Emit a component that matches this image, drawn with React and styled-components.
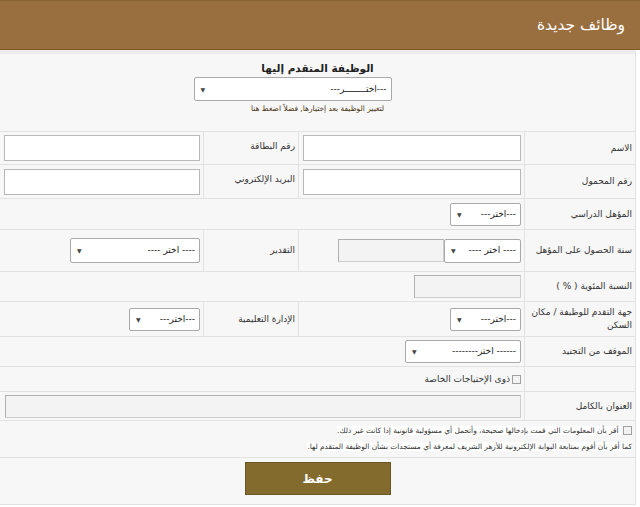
import React from 'react'
import styled, { createGlobalStyle } from 'styled-components'

const GlobalStyle = createGlobalStyle`
  html, body {
    margin: 0;
    padding: 0;
    background: #ffffff;
  }
  body {
    font-family: Tahoma, "DejaVu Sans", Arial, sans-serif;
  }
`

const Page = styled.div`
  width: 640px;
  height: 507px;
  direction: rtl;
  background: #ffffff;
  overflow: hidden;
`

const Header = styled.div`
  height: 48px;
  background: #9a6f3f;
  border-top: 1px solid #86632f;
  border-bottom: 1px solid #7d5a25;
  display: flex;
  align-items: center;
  padding-right: 15px;
`

const Title = styled.h1`
  margin: 0;
  color: #ffffff;
  font-size: 15.5px;
  font-weight: normal;
`

const Panel = styled.div`
  width: 635px;
  margin-right: auto;
  margin-left: 0;
  border-top: 4px solid #ececec;
  border-right: 1px solid #e2e2e2;
  background: #f7f7f7;
`

const JobSection = styled.div`
  height: 78px;
  display: flex;
  flex-direction: column;
  align-items: center;
  padding-top: 8px;
  box-sizing: border-box;
  border-bottom: 1px solid #e2e2e2;
`

const JobLabel = styled.div`
  font-size: 10.5px;
  font-weight: bold;
  color: #222;
  margin-bottom: 3px;
`

const JobSelectWrap = styled.div`
  margin-right: 50px;
`

const Hint = styled.div`
  font-size: 7.5px;
  color: #4a3210;
  margin-top: 3px;
`

const Row = styled.div`
  display: grid;
  grid-template-columns: 111px 226px 95px 1fr;
  height: ${p => p.h}px;
  border-bottom: 1px solid #e2e2e2;
  box-sizing: border-box;
`

const Cell = styled.div`
  grid-column: span ${p => p.span || 1};
  display: flex;
  align-items: ${p => (p.top ? 'flex-start' : 'center')};
  padding: ${p => (p.top ? '8px 3px 0 4px' : '0 3px 0 4px')};
  border-left: ${p => (p.last ? 'none' : '1px solid #e2e2e2')};
  font-size: 9px;
  color: #333;
  line-height: 13px;
`

const TextInput = styled.div`
  width: ${p => p.w}px;
  height: ${p => p.hgt || 26}px;
  box-sizing: border-box;
  background: ${p => (p.disabled ? '#f3f3f3' : '#ffffff')};
  border: 1px solid ${p => (p.disabled ? '#cdcdcd' : '#b8b8b8')};
  border-top-color: ${p => (p.disabled ? '#b0b0b0' : '#b8b8b8')};
  border-left-color: ${p => (p.disabled ? '#b0b0b0' : '#b8b8b8')};
`

const SelectBox = styled.div`
  width: ${p => p.w}px;
  height: ${p => p.hgt || 23}px;
  box-sizing: border-box;
  background: #ffffff;
  border: 1px solid #a9a9a9;
  border-radius: 2px;
  display: flex;
  align-items: center;
  justify-content: space-between;
  padding: 0 4px 0 6px;
  font-size: 9px;
  color: #222;
`

const Arrow = styled.span`
  font-size: 6px;
  color: #444;
`

const Check = styled.span`
  display: inline-block;
  width: 7px;
  height: 7px;
  border: 1px solid #a0a0a0;
  background: #f2f2f2;
  margin-left: 2px;
  flex-shrink: 0;
`

const Agree = styled.div`
  height: 37px;
  padding: 1px 3px 0 0;
  box-sizing: border-box;
  border-bottom: 1px solid #e2e2e2;
  font-size: 7.4px;
  color: #333;
`

const AgreeLine = styled.div`
  display: flex;
  align-items: center;
  height: 16px;
  span.txt {
    background: #ffffff;
  }
`

const Actions = styled.div`
  height: 47px;
  display: flex;
  justify-content: center;
  padding-top: 4px;
  box-sizing: border-box;
  border-bottom: 1px solid #e2e2e2;
`

const SaveButton = styled.button`
  width: 146px;
  height: 33px;
  background: #826b2c;
  border: 1px solid #6a5620;
  color: #ffffff;
  font-family: inherit;
  font-size: 12px;
  font-weight: bold;
  direction: rtl;
`

const Select = ({ w, hgt, children }) => (
  <SelectBox w={w} hgt={hgt}>
    <span>{children}</span>
    <Arrow>▼</Arrow>
  </SelectBox>
)

export default function App() {
  return (
    <Page>
      <GlobalStyle />
      <Header>
        <Title>وظائف جديدة</Title>
      </Header>
      <Panel>
        <JobSection>
          <JobLabel>الوظيفة المتقدم إليها</JobLabel>
          <JobSelectWrap>
            <Select w={198} hgt={24}>---اختــــــــر---</Select>
          </JobSelectWrap>
          <Hint>لتغيير الوظيفة بعد إختيارها, فضلاً اضغط هنا</Hint>
        </JobSection>

        <Row h={33}>
          <Cell>الاسم</Cell>
          <Cell><TextInput w={218} /></Cell>
          <Cell top>رقم البطاقة</Cell>
          <Cell last><TextInput w={196} /></Cell>
        </Row>
        <Row h={34}>
          <Cell>رقم المحمول</Cell>
          <Cell><TextInput w={218} /></Cell>
          <Cell top>البريد الإلكتروني</Cell>
          <Cell last><TextInput w={196} /></Cell>
        </Row>
        <Row h={31}>
          <Cell>المؤهل الدراسي</Cell>
          <Cell span={3} last><Select w={71}>---اختر--- </Select></Cell>
        </Row>
        <Row h={42}>
          <Cell>سنة الحصول على المؤهل</Cell>
          <Cell>
            <Select w={77} hgt={24}>---- اختر ----</Select>
            <TextInput w={106} hgt={23} disabled />
          </Cell>
          <Cell>التقدير</Cell>
          <Cell last><Select w={130} hgt={25}>---- اختر ----</Select></Cell>
        </Row>
        <Row h={30}>
          <Cell>النسبة المئوية ( % )</Cell>
          <Cell span={3} last><TextInput w={107} hgt={23} disabled /></Cell>
        </Row>
        <Row h={35}>
          <Cell>جهة التقدم للوظيفة / مكان السكن</Cell>
          <Cell><Select w={71}>---اختر--- </Select></Cell>
          <Cell>الإدارة التعليمية</Cell>
          <Cell last><Select w={71}>---اختر--- </Select></Cell>
        </Row>
        <Row h={30}>
          <Cell>الموقف من التجنيد</Cell>
          <Cell span={3} last><Select w={116}>------ اختر--------</Select></Cell>
        </Row>
        <Row h={25}>
          <Cell />
          <Cell span={3} last>
            <Check />
            <span>ذوى الإحتياجات الخاصة</span>
          </Cell>
        </Row>
        <Row h={29}>
          <Cell>العنوان بالكامل</Cell>
          <Cell span={3} last><TextInput w={516} hgt={23} disabled /></Cell>
        </Row>

        <Agree>
          <AgreeLine>
            <Check />
            <span className="txt">&nbsp;أقر بأن المعلومات التي قمت بإدخالها صحيحة، وأتحمل أي مسؤولية قانونية إذا كانت غير ذلك.</span>
          </AgreeLine>
          <AgreeLine>
            <span className="txt">كما أقر بأن أقوم بمتابعة البوابة الإلكترونية للأزهر الشريف لمعرفة أي مستجدات بشأن الوظيفة المتقدم لها.</span>
          </AgreeLine>
        </Agree>

        <Actions>
          <SaveButton>حفظ</SaveButton>
        </Actions>
      </Panel>
    </Page>
  )
}
